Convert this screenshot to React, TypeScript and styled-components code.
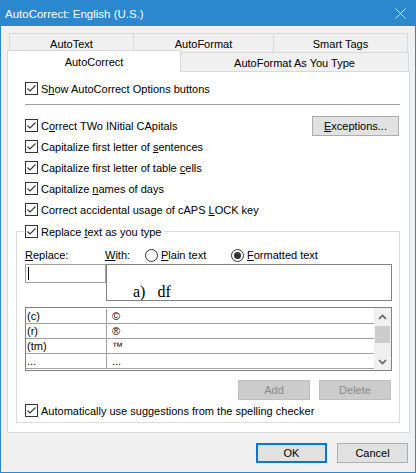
import React from "react";
import styled, { createGlobalStyle } from "styled-components";

const GlobalStyle = createGlobalStyle`
  html, body { margin: 0; padding: 0; background: #f0f0f0; }
  body { font-family: "Liberation Sans", Arial, sans-serif; font-size: 11px; color: #000; }
  * { box-sizing: border-box; }
`;

const Window = styled.div`
  width: 416px;
  height: 473px;
  border: 1px solid #2b88cf;
  background: #f0f0f0;
  display: flex;
  flex-direction: column;
  overflow: hidden;
`;

const TitleBar = styled.div`
  height: 25px;
  flex: none;
  background: #2b88cf;
  color: #fff;
  display: flex;
  align-items: center;
  justify-content: space-between;
  padding: 0 9px 0 4px;
  font-size: 11.5px;
`;

const Body = styled.div`
  flex: 1;
  display: flex;
  flex-direction: column;
  padding: 7px 5px 0 6px;
`;

const TabRow = styled.div<{ $indent: number }>`
  display: flex;
  margin: 0 1px 0 ${(p) => p.$indent}px;
  height: 19px;
`;

const Tab = styled.div<{ $w: number; $sel?: boolean; $first?: boolean }>`
  width: ${(p) => p.$w}px;
  flex: none;
  height: ${(p) => (p.$sel ? 22 : 19)}px;
  margin-top: ${(p) => (p.$sel ? -2 : 0)}px;
  background: ${(p) => (p.$sel ? "#fff" : "#f0f0f0")};
  border-top: 1px solid #d9d9d9;
  border-left: ${(p) => (p.$first || p.$sel ? "1px solid #d9d9d9" : "none")};
  border-right: 1px solid #d9d9d9;
  display: flex;
  align-items: center;
  justify-content: center;
  padding-top: ${(p) => (p.$sel ? 0 : 1)}px;
  position: ${(p) => (p.$sel ? "relative" : "static")};
  z-index: ${(p) => (p.$sel ? 1 : "auto")};
  white-space: nowrap;
`;

const Panel = styled.div`
  border: 1px solid #d9d9d9;
  background: #fff;
  display: flex;
  flex-direction: column;
  padding: 6px 0 9px 0;
`;

const CheckRow = styled.div<{ $pl?: number; $pr?: number }>`
  height: 21px;
  display: flex;
  align-items: center;
  padding-left: ${(p) => p.$pl ?? 17}px;
  padding-right: ${(p) => p.$pr ?? 10}px;
  white-space: nowrap;
`;

const BoxEl = styled.span`
  width: 13px;
  height: 13px;
  border: 1px solid #333;
  background: #fff;
  display: inline-flex;
  align-items: center;
  justify-content: center;
  flex: none;
  margin-right: 3px;
`;

const U = styled.span`
  text-decoration: underline;
  text-underline-offset: 1px;
`;

const Separator = styled.div`
  height: 1px;
  background: #a0a0a0;
  margin: 5px 9px 10px 17px;
`;

const Button = styled.button<{ $w: number; $default?: boolean; $disabled?: boolean }>`
  width: ${(p) => p.$w}px;
  height: 20px;
  flex: none;
  font: inherit;
  font-size: 11px;
  padding: 0;
  margin: 0;
  background: ${(p) => (p.$disabled ? "#cccccc" : "#e1e1e1")};
  color: ${(p) => (p.$disabled ? "#8a8a8a" : "#000")};
  border: ${(p) => (p.$default ? "2px solid #0078d7" : p.$disabled ? "1px solid #bfbfbf" : "1px solid #adadad")};
  display: flex;
  align-items: center;
  justify-content: center;
`;

const Spacer = styled.div`
  flex: 1;
`;

const GroupBox = styled.fieldset`
  margin: 1px 9px 0 8px;
  border: 1px solid #dcdcdc;
  padding: 4px 7px 1px 8px;
  min-width: 0;
`;

const Legend = styled.legend`
  padding: 0 3px 0 1px;
  margin-left: -1px;
  height: 21px;
  display: flex;
  align-items: center;
  white-space: nowrap;
`;

const LabelRow = styled.div`
  display: flex;
  align-items: center;
  height: 18px;
  white-space: nowrap;
`;

const FieldLabel = styled.span<{ $w: number }>`
  width: ${(p) => p.$w}px;
  flex: none;
`;

const RadioOption = styled.span<{ $w?: number }>`
  display: flex;
  align-items: center;
  width: ${(p) => (p.$w ? `${p.$w}px` : "auto")};
  flex: none;
`;

const RadioCircle = styled.span`
  width: 13px;
  height: 13px;
  border-radius: 50%;
  border: 1px solid #333;
  background: #fff;
  display: inline-flex;
  align-items: center;
  justify-content: center;
  margin-right: 3px;
  flex: none;
`;

const RadioDot = styled.span`
  width: 7px;
  height: 7px;
  border-radius: 50%;
  background: #333;
`;

const InputRow = styled.div`
  display: flex;
  align-items: flex-start;
`;

const ReplaceInput = styled.div`
  width: 81px;
  height: 19px;
  border: 1px solid #a0a0a0;
  background: #fff;
  flex: none;
  padding: 2px 0 0 2px;
`;

const Caret = styled.span`
  display: block;
  width: 1px;
  height: 13px;
  background: #000;
`;

const WithBox = styled.div`
  flex: 1;
  height: 37px;
  border: 1px solid #828282;
  background: #fff;
  overflow: hidden;
  padding: 18px 0 0 26px;
  font-family: "Liberation Serif", "Times New Roman", serif;
  font-size: 16px;
  line-height: 18px;
  white-space: pre;
`;

const ListBox = styled.div`
  margin-top: 6px;
  height: 64px;
  border: 1px solid #828282;
  background: #fff;
  display: flex;
  overflow: hidden;
`;

const Rows = styled.div`
  flex: 1;
  padding-top: 1px;
  display: flex;
  flex-direction: column;
`;

const Row = styled.div`
  height: 15px;
  flex: none;
  display: flex;
  border-bottom: 1px solid #a0a0a0;
`;

const Cell = styled.div<{ $w?: number }>`
  width: ${(p) => (p.$w ? `${p.$w}px` : "auto")};
  flex: ${(p) => (p.$w ? "none" : "1")};
  border-right: ${(p) => (p.$w ? "1px solid #a0a0a0" : "none")};
  padding-left: ${(p) => (p.$w ? 1 : 5)}px;
  display: flex;
  align-items: center;
  line-height: 13px;
  white-space: nowrap;
  overflow: hidden;
`;

const ScrollBar = styled.div`
  width: 17px;
  flex: none;
  background: #f0f0f0;
  display: flex;
  flex-direction: column;
  align-items: center;
`;

const ArrowBtn = styled.div`
  height: 17px;
  width: 17px;
  display: flex;
  align-items: center;
  justify-content: center;
  flex: none;
`;

const Track = styled.div`
  flex: 1;
  width: 100%;
  display: flex;
  flex-direction: column;
  align-items: center;
  padding-top: 1px;
`;

const Thumb = styled.div`
  width: 15px;
  height: 17px;
  background: #cdcdcd;
`;

const ButtonRow = styled.div`
  display: flex;
  justify-content: flex-end;
  gap: 9px;
  margin-top: 9px;
  padding-right: 1px;
`;

const Footer = styled.div`
  display: flex;
  justify-content: flex-end;
  gap: 10px;
  margin-top: 10px;
  padding-right: 2px;
`;

const CheckMark = () => (
  <svg width="11" height="11" viewBox="0 0 11 11">
    <polyline points="1.5,5.5 4,8 9.5,2.5" fill="none" stroke="#333" strokeWidth="1.1" />
  </svg>
);

const Check = ({ children }: { children: React.ReactNode }) => (
  <>
    <BoxEl>
      <CheckMark />
    </BoxEl>
    <span>{children}</span>
  </>
);

const Chevron = ({ up }: { up?: boolean }) => (
  <svg width="9" height="6" viewBox="0 0 9 6">
    <polyline
      points={up ? "1,5 4.5,1.5 8,5" : "1,1 4.5,4.5 8,1"}
      fill="none"
      stroke="#606060"
      strokeWidth="1.6"
    />
  </svg>
);

const CloseIcon = () => (
  <svg width="11" height="11" viewBox="0 0 11 11">
    <path d="M0.5 0.5 L10.5 10.5 M10.5 0.5 L0.5 10.5" stroke="#fff" strokeWidth="1" />
  </svg>
);

const entries: [string, string][] = [
  ["(c)", "©"],
  ["(r)", "®"],
  ["(tm)", "™"],
  ["...", "..."],
];

export default function App() {
  return (
    <>
      <GlobalStyle />
      <Window>
        <TitleBar>
          <span>AutoCorrect: English (U.S.)</span>
          <CloseIcon />
        </TitleBar>
        <Body>
          <TabRow $indent={2}>
            <Tab $w={125} $first>AutoText</Tab>
            <Tab $w={140}>AutoFormat</Tab>
            <Tab $w={134}>Smart Tags</Tab>
          </TabRow>
          <TabRow $indent={0}>
            <Tab $w={174} $sel>AutoCorrect</Tab>
            <Tab $w={228}>AutoFormat As You Type</Tab>
          </TabRow>
          <Panel>
            <CheckRow>
              <Check>
                S<U>h</U>ow AutoCorrect Options buttons
              </Check>
            </CheckRow>
            <Separator />
            <CheckRow>
              <Check>
                C<U>o</U>rrect TWo INitial CApitals
              </Check>
              <Spacer />
              <Button $w={87}>
                <span>
                  <U>E</U>xceptions...
                </span>
              </Button>
            </CheckRow>
            <CheckRow>
              <Check>
                Capitalize first letter of <U>s</U>entences
              </Check>
            </CheckRow>
            <CheckRow>
              <Check>
                Capitalize first letter of table <U>c</U>ells
              </Check>
            </CheckRow>
            <CheckRow>
              <Check>
                Capitalize <U>n</U>ames of days
              </Check>
            </CheckRow>
            <CheckRow>
              <Check>
                Correct accidental usage of cAPS <U>L</U>OCK key
              </Check>
            </CheckRow>
            <GroupBox>
              <Legend>
                <Check>
                  Replace <U>t</U>ext as you type
                </Check>
              </Legend>
              <LabelRow>
                <FieldLabel $w={80}>
                  <U>R</U>eplace:
                </FieldLabel>
                <FieldLabel $w={40}>
                  <U>W</U>ith:
                </FieldLabel>
                <RadioOption $w={86}>
                  <RadioCircle />
                  <span>
                    <U>P</U>lain text
                  </span>
                </RadioOption>
                <RadioOption>
                  <RadioCircle>
                    <RadioDot />
                  </RadioCircle>
                  <span>
                    <U>F</U>ormatted text
                  </span>
                </RadioOption>
              </LabelRow>
              <InputRow>
                <ReplaceInput>
                  <Caret />
                </ReplaceInput>
                <WithBox>{"a)   df"}</WithBox>
              </InputRow>
              <ListBox>
                <Rows>
                  {entries.map(([a, b], i) => (
                    <Row key={i}>
                      <Cell $w={81}>{a}</Cell>
                      <Cell>{b}</Cell>
                    </Row>
                  ))}
                </Rows>
                <ScrollBar>
                  <ArrowBtn>
                    <Chevron up />
                  </ArrowBtn>
                  <Track>
                    <Thumb />
                  </Track>
                  <ArrowBtn>
                    <Chevron />
                  </ArrowBtn>
                </ScrollBar>
              </ListBox>
              <ButtonRow>
                <Button $w={72} $disabled>Add</Button>
                <Button $w={72} $disabled>Delete</Button>
              </ButtonRow>
              <CheckRow $pl={0} $pr={0}>
                <Check>Automatically use suggestions from the spelling checker</Check>
              </CheckRow>
            </GroupBox>
          </Panel>
          <Footer>
            <Button $w={71} $default>OK</Button>
            <Button $w={71}>Cancel</Button>
          </Footer>
        </Body>
      </Window>
    </>
  );
}
